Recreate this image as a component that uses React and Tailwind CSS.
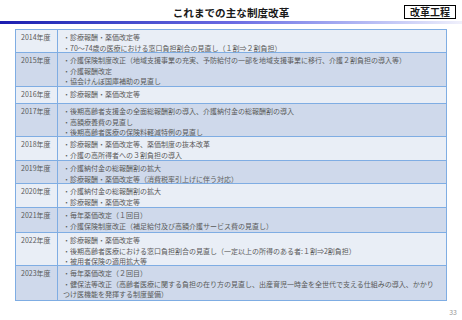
import React from 'react';

const rows = [
  {
    year: '2014年度',
    h: 'h-[23px]',
    dark: false,
    items: ['・診療報酬・薬価改定等', '・70～74歳の医療における窓口負担割合の見直し（１割⇒２割負担）'],
  },
  {
    year: '2015年度',
    h: 'h-[34px]',
    dark: true,
    items: [
      '・介護保険制度改正（地域支援事業の充実、予防給付の一部を地域支援事業に移行、介護２割負担の導入等）',
      '・介護報酬改定',
      '・協会けんぽ国庫補助の見直し',
    ],
  },
  { year: '2016年度', h: 'h-[17px]', dark: false, items: ['・診療報酬・薬価改定等'] },
  {
    year: '2017年度',
    h: 'h-[33px]',
    dark: true,
    items: [
      '・後期高齢者支援金の全面総報酬割の導入、介護納付金の総報酬割の導入',
      '・高額療養費の見直し',
      '・後期高齢者医療の保険料軽減特例の見直し',
    ],
  },
  {
    year: '2018年度',
    h: 'h-[24px]',
    dark: false,
    items: ['・診療報酬・薬価改定等、薬価制度の抜本改革', '・介護の高所得者への３割負担の導入'],
  },
  {
    year: '2019年度',
    h: 'h-[23px]',
    dark: true,
    items: ['・介護納付金の総報酬割の拡大', '・診療報酬・薬価改定等（消費税率引上げに伴う対応）'],
  },
  {
    year: '2020年度',
    h: 'h-[24px]',
    dark: false,
    items: ['・介護納付金の総報酬割の拡大', '・診療報酬・薬価改定等'],
  },
  {
    year: '2021年度',
    h: 'h-[25px]',
    dark: true,
    items: ['・毎年薬価改定（１回目）', '・介護保険制度改正（補足給付及び高額介護サービス費の見直し）'],
  },
  {
    year: '2022年度',
    h: 'h-[33px]',
    dark: false,
    items: [
      '・診療報酬・薬価改定等',
      '・後期高齢者医療における窓口負担割合の見直し（一定以上の所得のある者:１割⇒2割負担）',
      '・被用者保険の適用拡大等',
    ],
  },
  {
    year: '2023年度',
    h: 'h-[35px]',
    dark: true,
    items: [
      '・毎年薬価改定（２回目）',
      '・健保法等改正（高齢者医療に関する負担の在り方の見直し、出産育児一時金を全世代で支える仕組みの導入、かかりつけ医機能を発揮する制度整備）',
    ],
  },
];

const App = () => {
  return (
    <div className="w-[462px] h-[320px] bg-white overflow-hidden font-['Noto_Sans_CJK_JP',sans-serif]">
      {/* header */}
      <div className="grid grid-cols-[1fr_auto_1fr] h-[21px]">
        <div />
        <h1 className="mt-[8px] text-[10.6px] leading-none font-bold text-[#1a1a1a]">
          これまでの主な制度改革
        </h1>
        <div className="flex justify-end">
          <div className="mt-[5px] mr-[6px] h-[14px] px-[5px] border border-black bg-white text-[10px] leading-[12px] font-bold text-[#1a1a1a]">
            改革工程
          </div>
        </div>
      </div>
      <div className="h-[3px] bg-gradient-to-r from-[#1c1cb0] via-[#6a6ae2] to-[#f0f0fb]" />

      {/* table */}
      <div className="mt-[5px] ml-[15px] w-[432px] border-x border-t border-[#7fade3]">
        {rows.map((r) => (
          <div
            key={r.year}
            className={`flex ${r.h} border-b border-[#7fade3] ${r.dark ? 'bg-[#cfd9eb]' : 'bg-[#e9eef6]'} text-[7px] leading-[10.5px] text-[#595959]`}
          >
            <div className="w-[42px] shrink-0 border-r border-[#7fade3] pl-[5px] pt-[2px]">{r.year}</div>
            <div className="flex-1 pl-[5px] pr-[8px] pt-[2px]">
              {r.items.map((t) => (
                <div key={t}>{t}</div>
              ))}
            </div>
          </div>
        ))}
      </div>

      <div className="mt-[8px] pr-[5px] text-right text-[7px] leading-none text-[#9a9a9a]">33</div>
    </div>
  );
};

export default App;
